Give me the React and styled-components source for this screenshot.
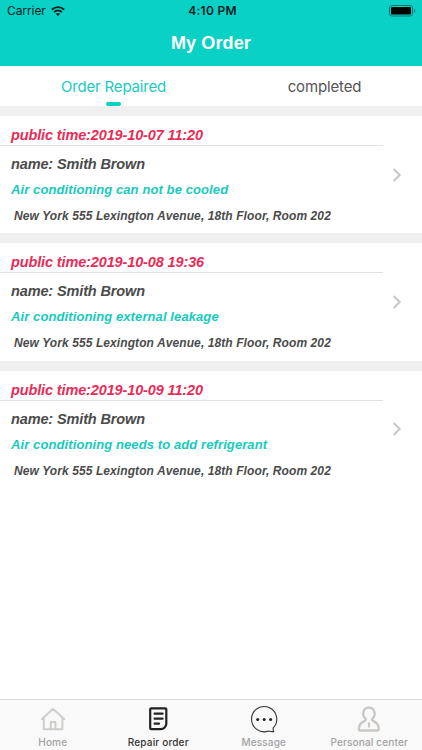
import React from "react";
import styled, { createGlobalStyle } from "styled-components";

const GlobalStyle = createGlobalStyle`
  * { box-sizing: border-box; }
  body { margin: 0; background: #fff; }
`;

const Screen = styled.div`
  width: 422px;
  height: 750px;
  display: flex;
  flex-direction: column;
  overflow: hidden;
  background: #fff;
  font-family: "Liberation Sans", Arial, sans-serif;
`;

const Header = styled.header`
  height: 66px;
  flex: none;
  background: #0ad1c5;
`;

const StatusBar = styled.div`
  height: 22px;
  display: grid;
  grid-template-columns: 1fr auto 1fr;
  align-items: center;
  padding: 0 6px 0 7px;
  color: #06211f;
  font: 400 12px/22px Inter, sans-serif;
`;

const Carrier = styled.div`
  display: flex;
  align-items: center;
  gap: 5px;
  letter-spacing: -0.08px;
`;

const Clock = styled.div`
  margin-left: 2px;
  font-weight: 600;
  letter-spacing: 0.3px;
`;

const BatterySlot = styled.div`
  display: flex;
  justify-content: flex-end;
`;

const Title = styled.h1`
  margin: 0;
  font-size: 18px;
  line-height: 42px;
  font-weight: 700;
  letter-spacing: 0.12px;
  text-align: center;
  color: #fff;
`;

const Tabs = styled.nav`
  height: 40px;
  flex: none;
  display: grid;
  grid-template-columns: 227px 1fr;
`;

const Tab = styled.div`
  display: flex;
  flex-direction: column;
  align-items: center;
  justify-content: space-between;
  font: 400 15px/41px Inter, sans-serif;
  letter-spacing: ${(p) => (p.$active ? "-0.17px" : "-0.14px")};
  color: ${(p) => (p.$active ? "#20cbc0" : "#555")};
  height: 40px;
`;

const TabLabel = styled.span`
  height: 36px;
`;

const Indicator = styled.span`
  width: 15px;
  height: 4px;
  border-radius: 2px;
  background: #0ad1c5;
`;

const Orders = styled.main`
  flex: 1;
  display: flex;
  flex-direction: column;
`;

const Order = styled.article`
  height: 127.3px;
  flex: none;
  border-top: 10px solid #f0f0f0;
  display: grid;
  grid-template-columns: 383px 1fr;
  align-items: center;
  font-weight: 700;
  font-style: italic;
  white-space: nowrap;
`;

const Details = styled.div`
  height: 100%;
`;

const Time = styled.div`
  height: 30px;
  padding-left: 11px;
  border-bottom: 1px solid #e2e2e4;
  font-size: 14.5px;
  line-height: 38px;
  letter-spacing: -0.13px;
  color: #e92c57;
`;

const Name = styled.div`
  padding-left: 11px;
  font-size: 14.5px;
  line-height: 36px;
  height: 31px;
  letter-spacing: -0.13px;
  color: #4b4b4b;
`;

const Problem = styled.div`
  padding-left: 11px;
  font-size: 13px;
  line-height: 26px;
  letter-spacing: 0.1px;
  color: #17cabd;
`;

const Address = styled.div`
  padding-left: 14px;
  font-size: 12px;
  line-height: 26px;
  letter-spacing: 0.09px;
  color: #4b4b4b;
`;

const Chevron = styled.svg`
  margin-left: 9px;
`;

const TabBar = styled.footer`
  height: 51px;
  flex: none;
  border-top: 1px solid #dcdcdc;
  background: #f9f9f9;
  display: grid;
  grid-template-columns: repeat(4, 1fr);
`;

const NavItem = styled.div`
  display: flex;
  flex-direction: column;
  align-items: center;
  padding-top: 5px;
  font: 500 10px/14px Inter, sans-serif;
  letter-spacing: 0.17px;
  white-space: nowrap;
  color: ${(p) => (p.$active ? "#333" : "#a2a2a2")};
`;

const NavIcon = styled.svg`
  width: 30px;
  height: 30px;
  fill: none;
  stroke-linecap: round;
  stroke-linejoin: round;
  stroke: ${(p) => p.$stroke};
  stroke-width: ${(p) => p.$weight || 2};
`;

const orders = [
  ["2019-10-07 11:20", "Air conditioning can not be cooled"],
  ["2019-10-08 19:36", "Air conditioning external leakage"],
  ["2019-10-09 11:20", "Air conditioning needs to add refrigerant"],
];

function Wifi() {
  return (
    <svg width="14" height="10" viewBox="0 0 14 10" fill="none" stroke="#06211f" strokeWidth="1.9">
      <path d="M.8 3.7C4.3.3 9.7.3 13.2 3.7" />
      <path d="M3.1 6.1C5.3 4 8.7 4 10.9 6.1" />
      <path d="M7 10 4.8 7.8C6 6.7 8 6.7 9.2 7.8Z" fill="#06211f" stroke="none" />
    </svg>
  );
}

function Battery() {
  return (
    <svg width="27" height="12" viewBox="0 0 27 12">
      <rect x=".5" y=".5" width="23" height="10.5" rx="2.5" fill="none" stroke="#07766f" />
      <rect x="2" y="2" width="20" height="7.5" rx="1.2" fill="#000" />
      <path d="M25 4v3.7c1.7-.5 1.7-3.2 0-3.7Z" fill="#07766f" />
    </svg>
  );
}

export default function App() {
  return (
    <Screen>
      <GlobalStyle />
      <Header>
        <StatusBar>
          <Carrier>Carrier <Wifi /></Carrier>
          <Clock>4:10 PM</Clock>
          <BatterySlot><Battery /></BatterySlot>
        </StatusBar>
        <Title>My Order</Title>
      </Header>
      <Tabs>
        <Tab $active><TabLabel>Order Repaired</TabLabel><Indicator /></Tab>
        <Tab><TabLabel>completed</TabLabel></Tab>
      </Tabs>
      <Orders>
        {orders.map(([time, problem]) => (
          <Order key={time}>
            <Details>
              <Time>public time:{time}</Time>
              <Name>name: Smith Brown</Name>
              <Problem>{problem}</Problem>
              <Address>New York 555 Lexington Avenue, 18th Floor, Room 202</Address>
            </Details>
            <Chevron width="10" height="14" viewBox="0 0 10 14" fill="none" stroke="#c5c5ca" strokeWidth="1.9">
              <path d="M1.7 1 7.7 7 1.7 13" />
            </Chevron>
          </Order>
        ))}
      </Orders>
      <TabBar>
        <NavItem>
          <NavIcon viewBox="0 0 30 30" $stroke="#cfcdca">
            <path d="M4 14 15 4 26.2 14M5.8 12.6V24.2H24.4V12.6M12.8 24V17H17.4V24" />
          </NavIcon>
          Home
        </NavItem>
        <NavItem $active>
          <NavIcon viewBox="0 0 30 30" $stroke="#222" $weight="2.2">
            <path d="M8.2 3.3H22.3Q23.3 3.3 23.3 4.3V18.8C23.3 21.5 20.8 24.2 17.8 24.2H8.2Q7.2 24.2 7.2 23.2V4.3Q7.2 3.3 8.2 3.3ZM11.6 8.7H19.6M11.6 13.7H19.6M11.6 18.7H16" />
          </NavIcon>
          Repair order
        </NavItem>
        <NavItem>
          <NavIcon viewBox="0 0 30 30" $stroke="#333" $weight="1.1">
            <path d="M24.2 22.9A12.6 12.6 0 1 0 19.4 26Q22 26.8 24.8 26.6Q24 25 24.2 22.9Z" />
            <g fill="#222" stroke="none"><circle cx="8.7" cy="14.4" r="1.5" /><circle cx="15.2" cy="14.4" r="1.5" /><circle cx="21.6" cy="14.4" r="1.5" /></g>
          </NavIcon>
          Message
        </NavItem>
        <NavItem>
          <NavIcon viewBox="0 0 30 30" $stroke="#cac7c4" $weight="2.3">
            <path d="M11.6 13.8C7.6 10.3 8.6 2.6 14.9 2.6C21.2 2.6 22.2 10.3 18.2 13.8C17.8 15 18.4 15.6 19.5 16.1C23.4 17.8 24.8 20.3 24.8 24.5Q24.8 25.5 23.8 25.5H5.8Q4.8 25.5 4.8 24.5C4.8 20.3 6.2 17.8 10.3 16.1C11.4 15.6 12 15 11.6 13.8ZM15 18.3V21.6" />
          </NavIcon>
          Personal center
        </NavItem>
      </TabBar>
    </Screen>
  );
}
